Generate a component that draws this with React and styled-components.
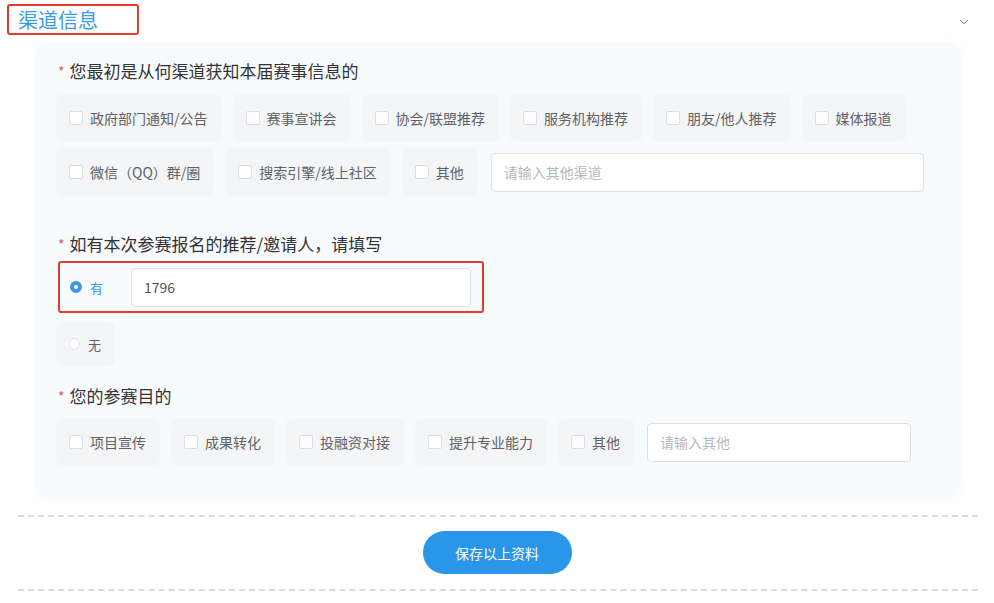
import React from "react";
import styled, { createGlobalStyle } from "styled-components";
import { ChevronDown } from "lucide-react";

const channels = [
  ["政府部门通知/公告", "赛事宣讲会", "协会/联盟推荐", "服务机构推荐", "朋友/他人推荐", "媒体报道"],
  ["微信（QQ）群/圈", "搜索引擎/线上社区", "其他"],
];

const purposes = ["项目宣传", "成果转化", "投融资对接", "提升专业能力", "其他"];

const GlobalStyle = createGlobalStyle`
  body {
    margin: 0;
    background: #fff;
    font-family: "Noto Sans CJK SC", "Noto Sans", sans-serif;
  }
`;

const Page = styled.div`
  width: 994px;
  height: 603px;
  overflow: hidden;
`;

const Header = styled.div`
  height: 45px;
  display: flex;
  align-items: flex-start;
  justify-content: space-between;
  padding: 4px 0 0 7px;
  box-sizing: border-box;
`;

const TitleBox = styled.div`
  width: 132px;
  height: 31px;
  box-sizing: border-box;
  border: 2px solid #e23a2f;
  border-radius: 3px;
  padding-left: 9px;
  font-size: 20px;
  line-height: 27px;
  color: #3a9de0;
`;

const Toggle = styled.div`
  margin: 11px 23px 0 0;
  color: #444;
  display: flex;
`;

const Panel = styled.div`
  margin: 0 37px 0 38px;
  padding: 14px 20px 32px;
  background: #f8fbfe;
  border-radius: 6px;
  box-shadow: 0 0 8px rgba(230, 240, 248, 0.8);
`;

const Label = styled.div`
  font-size: 17px;
  line-height: 24px;
  color: #333;
  margin-top: ${(p) => p.$top || 0}px;

  &::before {
    content: "*";
    color: #e0574a;
    font-size: 14px;
    margin-right: 5px;
    vertical-align: 1px;
  }
`;

const OptionRow = styled.div`
  display: flex;
  align-items: center;
  gap: 15px;
  margin-top: ${(p) => p.$top || 0}px;
`;

const Option = styled.div`
  height: 44px;
  display: flex;
  align-items: center;
  gap: 7px;
  padding: 0 12px 0 11px;
  background: #f3f5f7;
  border-radius: 3px;
  box-shadow: 0 0 4px rgba(235, 238, 242, 0.9);
  font-size: 14px;
  color: #606266;
  white-space: nowrap;
`;

const Box = styled.span`
  width: 14px;
  height: 14px;
  box-sizing: border-box;
  background: #fff;
  border: 1px solid #dcdfe6;
  border-radius: 2px;
`;

const TextInput = styled.div`
  width: ${(p) => p.$w}px;
  height: 39px;
  box-sizing: border-box;
  border: 1px solid #dcdfe6;
  border-radius: 4px;
  background: #fff;
  display: flex;
  align-items: center;
  padding-left: 12px;
  font-size: 14px;
  color: ${(p) => (p.$filled ? "#555" : "#b5b9c0")};
`;

const Highlight = styled.div`
  width: 426px;
  height: 52px;
  box-sizing: border-box;
  margin-top: 5px;
  border: 2px solid #e23a2f;
  border-radius: 3px;
  display: flex;
  align-items: center;
  justify-content: space-between;
  padding-right: 11px;
`;

const RadioOption = styled.div`
  height: 42px;
  display: flex;
  align-items: center;
  gap: 8px;
  padding: 0 12px 0 10px;
  border-radius: 3px;
  font-size: 13px;
  color: ${(p) => (p.$on ? "#3f95e6" : "#606266")};
  background: ${(p) => (p.$on ? "transparent" : "#f3f5f7")};
  box-shadow: ${(p) => (p.$on ? "none" : "0 0 4px rgba(235, 238, 242, 0.9)")};
  width: fit-content;
  margin-top: ${(p) => p.$top || 0}px;
`;

const Dot = styled.span`
  width: 12px;
  height: 12px;
  box-sizing: border-box;
  border-radius: 50%;
  background: #fff;
  border: ${(p) => (p.$on ? "4px solid #3f95e6" : "1px solid #e1e4ea")};
`;

const Dashed = styled.div`
  margin: ${(p) => p.$top}px 16px 0 18px;
  border-top: 2px dashed #dcdcdc;
`;

const Footer = styled.div`
  display: flex;
  justify-content: center;
  padding: 14px 0 15px;
`;

const SaveButton = styled.button`
  width: 149px;
  height: 43px;
  border: none;
  border-radius: 22px;
  background: #2996ea;
  color: #fff;
  font-family: inherit;
  font-size: 14px;
`;

const Check = ({ label }) => (
  <Option>
    <Box />
    {label}
  </Option>
);

export default function App() {
  return (
    <Page>
      <GlobalStyle />
      <Header>
        <TitleBox>渠道信息</TitleBox>
        <Toggle>
          <ChevronDown size={14} strokeWidth={1.4} />
        </Toggle>
      </Header>
      <Panel>
        <Label>您最初是从何渠道获知本届赛事信息的</Label>
        <OptionRow $top={13}>
          {channels[0].map((c) => (
            <Check key={c} label={c} />
          ))}
        </OptionRow>
        <OptionRow $top={10}>
          {channels[1].map((c) => (
            <Check key={c} label={c} />
          ))}
          <TextInput $w={433}>请输入其他渠道</TextInput>
        </OptionRow>

        <Label $top={38}>如有本次参赛报名的推荐/邀请人，请填写</Label>
        <Highlight>
          <RadioOption $on>
            <Dot $on />
            有
          </RadioOption>
          <TextInput $w={340} $filled>1796</TextInput>
        </Highlight>
        <RadioOption $top={10}>
          <Dot />
          无
        </RadioOption>

        <Label $top={19}>您的参赛目的</Label>
        <OptionRow $top={12}>
          {purposes.map((c) => (
            <Check key={c} label={c} />
          ))}
          <TextInput $w={264}>请输入其他</TextInput>
        </OptionRow>
      </Panel>
      <Dashed $top={19} />
      <Footer>
        <SaveButton>保存以上资料</SaveButton>
      </Footer>
      <Dashed $top={0} />
    </Page>
  );
}
